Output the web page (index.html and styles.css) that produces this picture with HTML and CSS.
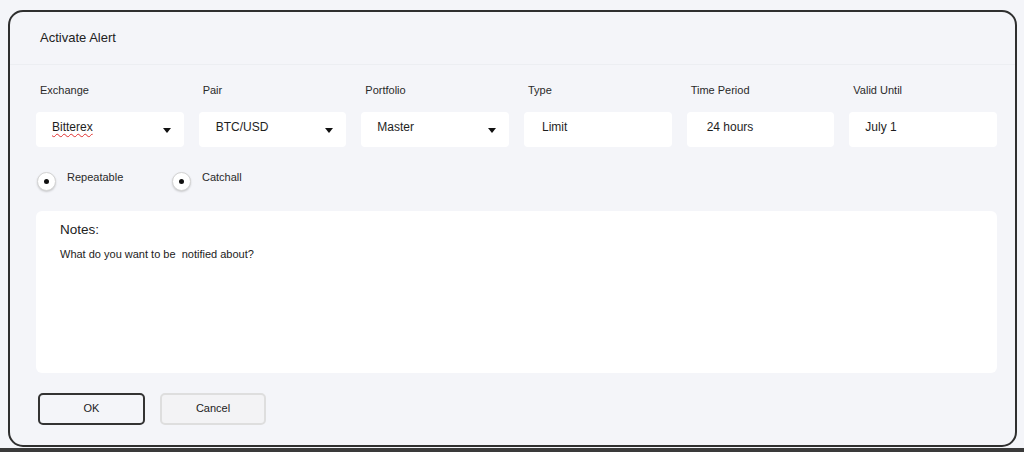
FILE: index.html
```html
<!DOCTYPE html>
<html>
<head>
<meta charset="utf-8">
<link rel="stylesheet" href="styles.css">
</head>
<body>
<div class="page">
  <div class="card">
    <div class="card-header">Activate Alert</div>
    <div class="card-body">
      <div class="fields">
        <div class="field">
          <div class="label">Exchange</div>
          <div class="box"><span class="val spell">Bitterex</span><span class="caret"></span></div>
        </div>
        <div class="field">
          <div class="label">Pair</div>
          <div class="box box-pair"><span class="val">BTC/USD</span><span class="caret"></span></div>
        </div>
        <div class="field">
          <div class="label">Portfolio</div>
          <div class="box"><span class="val">Master</span><span class="caret"></span></div>
        </div>
        <div class="field">
          <div class="label">Type</div>
          <div class="box box-type"><span class="val">Limit</span></div>
        </div>
        <div class="field">
          <div class="label">Time Period</div>
          <div class="box box-period"><span class="val">24 hours</span></div>
        </div>
        <div class="field">
          <div class="label">Valid Until</div>
          <div class="box"><span class="val">July 1</span></div>
        </div>
      </div>
      <div class="radios">
        <div class="radio radio-first"><span class="circle"><span class="dot"></span></span><span class="rlabel">Repeatable</span></div>
        <div class="radio"><span class="circle"><span class="dot"></span></span><span class="rlabel">Catchall</span></div>
      </div>
      <div class="notes">
        <div class="notes-title">Notes:</div>
        <div class="notes-text">What do you want to be  notified about?</div>
      </div>
      <div class="buttons">
        <div class="btn btn-ok">OK</div>
        <div class="btn btn-cancel">Cancel</div>
      </div>
    </div>
  </div>
  <div class="next-edge"></div>
</div>
</body>
</html>
```

FILE: styles.css
```css
* { box-sizing: border-box; }
html, body {
  margin: 0;
  padding: 0;
  background: #f4f5f9;
  font-family: "Liberation Sans", Arial, sans-serif;
  color: #222;
  overflow: hidden;
}
.page {
  width: 1024px;
  height: 452px;
  padding-top: 10px;
}
.card {
  margin-left: 8px;
  width: 1009px;
  height: 437px;
  border: 2px solid #2f2f2f;
  border-radius: 15px;
  background: #f4f5f9;
}
.card-header {
  height: 53px;
  line-height: 52px;
  padding-left: 30px;
  font-size: 13px;
  color: #222;
  border-bottom: 1px solid #eceef2;
}
.card-body {
  padding: 18px 18px 0 26px;
}
.fields {
  display: grid;
  grid-template-columns: repeat(6, 1fr);
  column-gap: 15px;
}
.label {
  font-size: 11px;
  line-height: 14px;
  padding-left: 4px;
  color: #2a2a2a;
}
.box {
  margin-top: 15px;
  height: 35px;
  background: #fff;
  border-radius: 4px;
  display: flex;
  align-items: center;
  justify-content: space-between;
  padding: 0 13px 0 16px;
}
.box-pair { padding-left: 17px; }
.box-type { padding-left: 18px; }
.box-period { padding-left: 20px; }
.val {
  font-size: 12px;
  line-height: 14px;
  margin-bottom: 6px;
  color: #1e1e1e;
}
.spell {
  text-decoration: underline wavy #e03030;
  text-decoration-thickness: 1px;
  text-underline-offset: 2px;
}
.caret {
  width: 0;
  height: 0;
  border-left: 4px solid transparent;
  border-right: 4px solid transparent;
  border-top: 5px solid #111;
  margin-top: 1px;
}
.radios {
  display: flex;
  margin-top: 23px;
  padding-left: 1px;
}
.radio {
  display: flex;
  align-items: flex-start;
}
.radio-first {
  width: 135px;
}
.circle {
  margin-top: 2px;
  width: 19px;
  height: 19px;
  border-radius: 50%;
  background: #fff;
  border: 1px solid #d4d4d4;
  box-shadow: 0 1px 2px rgba(0, 0, 0, 0.18);
  display: flex;
  align-items: center;
  justify-content: center;
}
.dot {
  width: 5px;
  height: 5px;
  border-radius: 50%;
  background: #111;
}
.rlabel {
  margin-left: 11px;
  font-size: 11px;
  line-height: 14px;
  color: #2a2a2a;
}
.notes {
  margin-top: 20px;
  height: 162px;
  background: #fff;
  border-radius: 6px;
  padding: 11px 24px;
}
.notes-title {
  font-size: 13.5px;
  line-height: 16px;
  color: #222;
}
.notes-text {
  margin-top: 9px;
  font-size: 11px;
  line-height: 14px;
  white-space: pre;
  color: #222;
}
.buttons {
  display: flex;
  gap: 15px;
  margin-top: 20px;
  padding-left: 2px;
}
.btn {
  width: 107px;
  height: 32px;
  border-radius: 5px;
  display: flex;
  align-items: center;
  justify-content: center;
  padding-bottom: 2px;
  font-size: 11px;
  color: #222;
}
.btn-ok {
  border: 2px solid #333;
}
.btn-cancel {
  width: 106px;
  border: 2px solid #dedede;
  background: #f3f3f5;
}
.next-edge {
  margin-top: 1px;
  height: 4px;
  background: #3a3a3a;
}
```
